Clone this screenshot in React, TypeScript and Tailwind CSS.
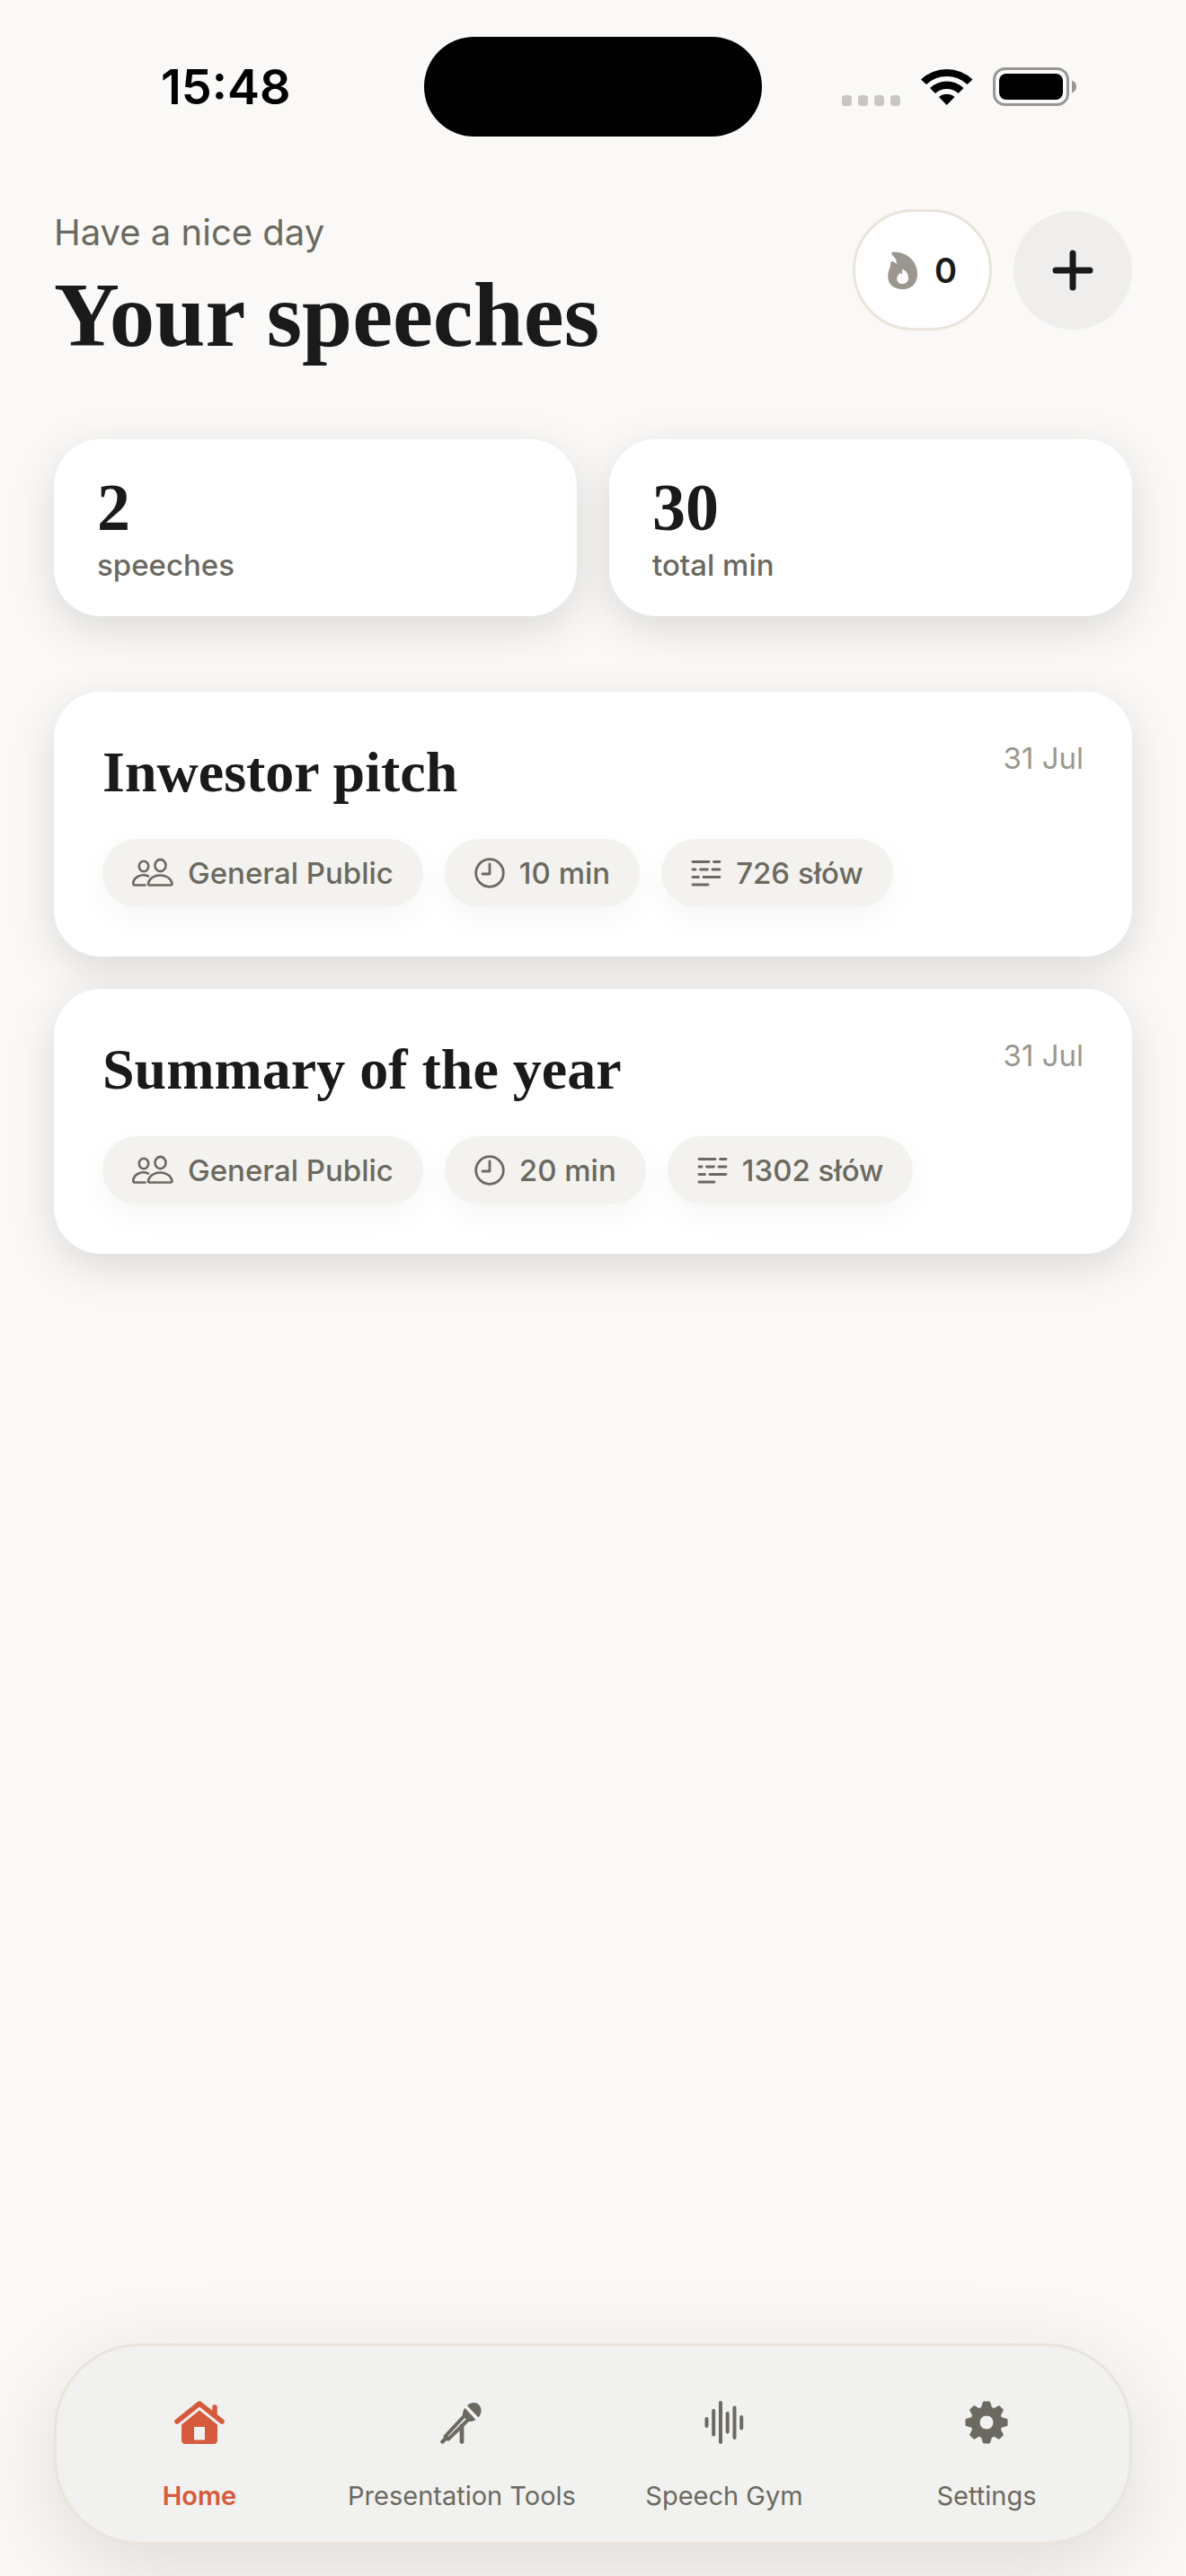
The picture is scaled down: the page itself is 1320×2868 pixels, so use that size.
import type { ReactNode } from "react";

const SPEECHES = [
  { id: 1, title: "Inwestor pitch", date: "31 Jul", audience: "General Public", length: "10 min", words: "726 słów" },
  { id: 2, title: "Summary of the year", date: "31 Jul", audience: "General Public", length: "20 min", words: "1302 słów" },
];

const STATS = [
  { label: "speeches", value: "2" },
  { label: "total min", value: "30" },
];

const TABS = [
  { id: "home", label: "Home", icon: <HomeIcon />, active: true },
  { id: "tools", label: "Presentation Tools", icon: <MicIcon />, active: false },
  { id: "gym", label: "Speech Gym", icon: <WaveIcon />, active: false },
  { id: "settings", label: "Settings", icon: <GearIcon />, active: false },
];

function HomeIcon() {
  return (
    <svg viewBox="0 0 56 48" className="w-14 h-12" aria-hidden="true">
      <path d="M3 23 28 3 53 23M45 16V7" fill="none" stroke="currentColor" strokeWidth="5.5" strokeLinecap="round" strokeLinejoin="round" />
      <path fill="currentColor" fillRule="evenodd" d="M28 10.5 48 26.5V43.500Q48 48 43.500 48H12.500Q8 48 8 43.500V26.500ZM22 29V43.500H34V29Z" />
    </svg>
  );
}

function MicIcon() {
  return (
    <svg viewBox="0 0 48 48" className="size-12" aria-hidden="true">
      <path fill="currentColor" d="M30 5.500C33 1.500 39 .8 42.800 4.200S46.500 14 42.500 18.500Z" />
      <path fill="currentColor" d="M27.500 8 39.500 21C36 23.200 33.500 23.300 31 23L25 17C24.500 13.500 25.300 10.500 27.500 8Z" />
      <path d="M26.500 17 5.500 39.500 9 42.700 30 22" fill="none" stroke="currentColor" strokeWidth="4" strokeLinecap="round" strokeLinejoin="round" />
      <path d="M2.500 45.500 7 41" fill="none" stroke="currentColor" strokeWidth="4.500" strokeLinecap="round" />
      <path d="M24 28V45.500" fill="none" stroke="currentColor" strokeWidth="4.800" strokeLinecap="round" />
    </svg>
  );
}

function WaveIcon() {
  return (
    <svg viewBox="0 0 44 48" className="w-11 h-12" fill="none" stroke="currentColor" strokeWidth="4" strokeLinecap="round" aria-hidden="true">
      <path d="M2.500 20V28M10.200 11V37.500M18 2V46M25.700 14V34.500M33.500 7.500V41M41.200 18V30.500" />
    </svg>
  );
}

function GearIcon() {
  return (
    <svg viewBox="0 0 48 48" className="size-12" fill="currentColor" stroke="currentColor" strokeWidth="1" strokeLinejoin="round" aria-hidden="true">
      <path
        fillRule="evenodd"
        d="M20.500 1H27.500L29.500 7.500 32.500 8.700 38 5.500 42.500 10 39.500 16 40.500 18.700 47 20.500V27.500L40.500 29.300 39.500 32 42.500 38 38 42.500 32.500 39.300 29.500 40.500 27.500 47H20.500L18.500 40.500 15.500 39.300 10 42.500 5.500 38 8.500 32 7.500 29.300 1 27.500V20.500L7.500 18.700 8.500 16 5.500 10 10 5.500 15.500 8.700 18.500 7.500ZM24 16A8 8 0 1 0 24 32 8 8 0 0 0 24 16Z"
      />
    </svg>
  );
}

function PeopleIcon() {
  return (
    <svg viewBox="0 0 46 34" className="w-[46px] h-[34px]" fill="none" stroke="currentColor" strokeWidth="2.6" strokeLinejoin="round" strokeLinecap="round" aria-hidden="true">
      <ellipse cx="13" cy="9.500" rx="5.200" ry="5.800" />
      <ellipse cx="31.500" cy="8.500" rx="6" ry="6.600" />
      <path d="M18 20.500C10 17 1.500 22 1.300 28.500Q1.300 30.500 3 30.500H14.500" />
      <path d="M19.500 30.500Q17.500 30.500 18 28.500C20.500 16.500 42 16.500 44.500 28.500Q44.700 30.500 42.800 30.500Z" />
    </svg>
  );
}

function ClockIcon() {
  return (
    <svg viewBox="0 0 34 34" className="size-[34px]" fill="none" stroke="currentColor" strokeWidth="2.8" strokeLinecap="round" strokeLinejoin="round" aria-hidden="true">
      <circle cx="17" cy="17" r="15.300" />
      <path d="M17 7V18H9" />
    </svg>
  );
}

function WordsIcon() {
  return (
    <svg viewBox="0 0 34 34" className="size-[34px]" fill="none" stroke="currentColor" strokeWidth="2.8" strokeLinecap="round" aria-hidden="true">
      <path d="M2 4.500H20M25.500 4.500H32M2 13H5M10.500 13H18.500M24 13H32M2 21.500H8.500M14 21.500H32M2 30H19" />
    </svg>
  );
}

function FlameIcon() {
  return (
    <svg viewBox="0 0 34 42" className="w-[34px] h-[42px] text-[#9c978e]" fill="currentColor" aria-hidden="true">
      <path
        fillRule="evenodd"
        d="M6 .4C21 0 33 10 33 25.500C33 36 26 42 16 42C7 42 .3 36.500.3 28C.3 21 3 19 3.200 13.500C3.200 10.500 5.500 10.500 7.500 12L10 14C10 9 8 7 5.500 4.500C3.500 2.500 4.500.5 6 .4ZM16 19.500C16.500 22 16 24 15.800 26L14 23.500C12.500 25.500 10.300 27 10.300 30.500C10.300 34 12.800 36 16.500 36C20.500 36 23 33.500 23 29.500C23 24.500 20 21 16 19.500Z"
      />
    </svg>
  );
}

function StatusBar() {
  return (
    <div className="grid grid-cols-[1fr_376px_1fr] items-center px-[121px] pt-[41px]">
      <span className="pl-[58px] text-[54px] leading-[64px] font-semibold text-black">15:48</span>
      <div className="h-[111px] rounded-full bg-black" />
      <svg viewBox="0 0 262 44" className="justify-self-end w-[262px] h-11" aria-hidden="true">
        <g fill="#c8c7c5">
          <rect x="0" y="31" width="11" height="12" rx="3.5" />
          <rect x="18" y="31" width="11" height="12" rx="3.5" />
          <rect x="36" y="31" width="11" height="12" rx="3.5" />
          <rect x="54" y="31" width="11" height="12" rx="3.5" />
        </g>
        <path d="M88 13.500A42 42 0 0 1 145.500 13.500L139.500 19A33 33 0 0 0 94 19ZM98 23A27 27 0 0 1 135.500 23L129.500 29A18.500 18.500 0 0 0 104 29ZM108 33A13.500 13.500 0 0 1 125.500 33L116.700 42Z" fill="#000" />
        <rect x="169.500" y="1.500" width="82" height="40" rx="12" fill="none" stroke="#989795" strokeWidth="3" />
        <rect x="175" y="7" width="71" height="29" rx="8" fill="#000" />
        <path d="M256 14.500Q261 16.500 261 21.500T256 28.500Z" fill="#989795" />
      </svg>
    </div>
  );
}

function Chip({ icon, children }: { icon: ReactNode; children: ReactNode }) {
  return (
    <span className="flex items-center gap-4 h-[76px] px-[33px] rounded-full bg-[#f3f2ee] text-[#6b6960] text-[33px] leading-10 font-medium whitespace-nowrap shadow-[0_12px_36px_rgba(0,0,0,0.04)]">
      {icon}
      {children}
    </span>
  );
}

export default function App() {
  return (
    <div className="min-h-screen flex flex-col bg-[#faf9f7] text-[#1a1a1a] font-['Inter','Liberation_Sans',sans-serif] overflow-hidden">
      <StatusBar />

      {/* Header */}
      <header className="flex items-start justify-between px-[60px] pt-[81px]">
        <div>
          <p className="text-[40px] leading-[52px] text-[#6b6960]">Have a nice day</p>
          <h1 className="mt-2 text-[101px] leading-[116px] font-bold font-['Liberation_Serif',serif]">Your speeches</h1>
        </div>
        <div className="flex items-center gap-6">
          <div className="flex items-center justify-center gap-[18px] w-[155px] h-[135px] rounded-full bg-white border-3 border-[#eae4da]">
            <FlameIcon />
            <span className="text-[38px] leading-[48px] font-semibold">0</span>
          </div>
          <button type="button" aria-label="New speech" className="flex items-center justify-center size-[132px] rounded-full bg-[#efeeed] cursor-pointer">
            <svg viewBox="0 0 46 46" className="size-[46px]" aria-hidden="true">
              <path d="M23 4V42M4 23H42" stroke="currentColor" strokeWidth="7" strokeLinecap="round" />
            </svg>
          </button>
        </div>
      </header>

      <main className="flex-1 px-[60px] pt-20">
        {/* Stats */}
        <div className="grid grid-cols-2 gap-9">
          {STATS.map(s => (
            <div key={s.label} className="h-[197px] px-12 pt-9 rounded-[52px] bg-white shadow-[0_14px_50px_rgba(0,0,0,0.13)]">
              <div className="text-[74px] leading-[80px] font-bold font-['Liberation_Serif',serif]">{s.value}</div>
              <div className="mt-1 text-[33px] leading-10 font-medium text-[#6b6960]">{s.label}</div>
            </div>
          ))}
        </div>

        {/* Speech list */}
        <div className="flex flex-col gap-9 mt-[84px]">
          {SPEECHES.map(s => (
            <article key={s.id} className="px-[54px] pt-[54px] pb-[55px] rounded-[52px] bg-white shadow-[0_14px_50px_rgba(0,0,0,0.13)]">
              <div className="flex items-start justify-between">
                <h2 className="text-[64px] leading-[72px] font-bold font-['Liberation_Serif',serif]">{s.title}</h2>
                <time className="text-[33px] leading-10 text-[#9c978e]">{s.date}</time>
              </div>
              <div className="flex gap-6 mt-[38px]">
                <Chip icon={<PeopleIcon />}>{s.audience}</Chip>
                <Chip icon={<ClockIcon />}>{s.length}</Chip>
                <Chip icon={<WordsIcon />}>{s.words}</Chip>
              </div>
            </article>
          ))}
        </div>
      </main>

      {/* Tab bar */}
      <nav className="grid grid-cols-4 mx-[60px] mb-[35px] px-[13px] h-[224px] rounded-[96px] bg-[#f1f1f0] border-3 border-[#eae4da] shadow-[0_26px_100px_rgba(0,0,0,0.12)]">
        {TABS.map(t => (
          <a key={t.id} href={`#${t.id}`} className={`flex flex-col items-center pt-[61px] gap-10 whitespace-nowrap no-underline text-[29px] leading-9 ${t.active ? "text-[#d65a3c] font-semibold" : "text-[#6b6960]"}`}>
            {t.icon}
            {t.label}
          </a>
        ))}
      </nav>
    </div>
  );
}
